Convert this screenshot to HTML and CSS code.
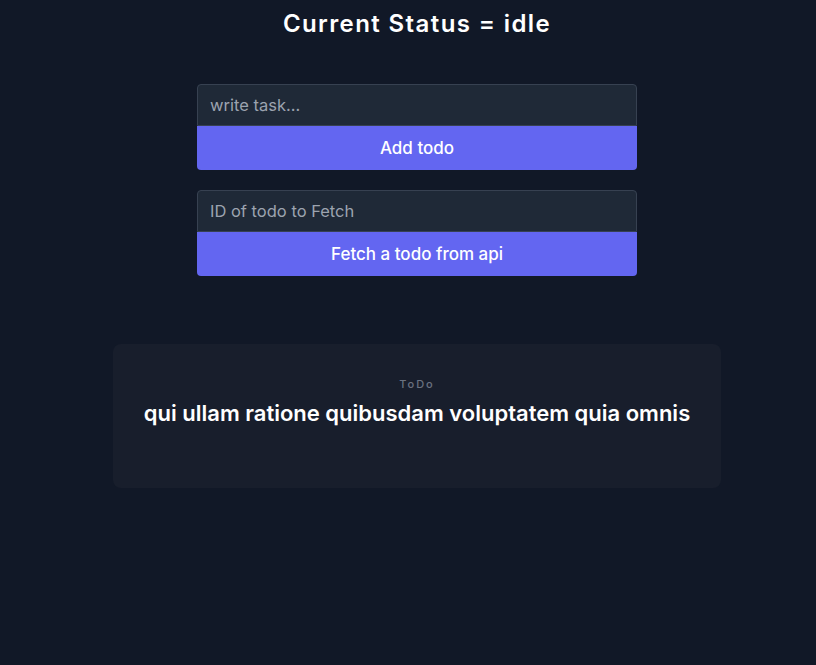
FILE: index.html
```html
<!DOCTYPE html>
<html>
<head>
<meta charset="utf-8">
<link rel="stylesheet" href="styles.css">
</head>
<body>
<div class="page">
  <h1 class="title">Current Status = idle</h1>
  <div class="forms">
    <form class="group">
      <input class="field" type="text" placeholder="write task...">
      <button class="btn" type="button">Add todo</button>
    </form>
    <form class="group">
      <input class="field" type="text" placeholder="ID of todo to Fetch">
      <button class="btn" type="button">Fetch a todo from api</button>
    </form>
  </div>
  <div class="card">
    <div class="label">ToDo</div>
    <div class="todo">qui ullam ratione quibusdam voluptatem quia omnis</div>
  </div>
</div>
</body>
</html>
```

FILE: styles.css
```css
html, body {
  margin: 0;
  padding: 0;
  background: #111827;
  height: 100%;
}
body {
  font-family: Inter, "Noto Sans", sans-serif;
  color: #fff;
}
.page {
  padding-left: 18px;
  display: flex;
  flex-direction: column;
  align-items: center;
}
.title {
  margin: 8px 0 0;
  font-size: 24px;
  line-height: 32px;
  font-weight: 600;
  letter-spacing: 1.4px;
}
.forms {
  margin-top: 44px;
  display: flex;
  flex-direction: column;
  gap: 20px;
  width: 440px;
}
.group {
  display: flex;
  flex-direction: column;
  margin: 0;
}
.field {
  box-sizing: border-box;
  height: 42px;
  padding: 0 12px;
  background: #1f2937;
  border: 1px solid #374151;
  border-radius: 4px 4px 0 0;
  color: #fff;
  font-family: inherit;
  font-size: 16.5px;
  outline: none;
}
.field::placeholder {
  color: #9ca3af;
}
.btn {
  height: 44px;
  border: none;
  border-radius: 0 0 4px 4px;
  background: #6366f1;
  color: #fff;
  font-family: inherit;
  font-size: 17px;
  font-weight: 500;
}
.card {
  margin-top: 68px;
  box-sizing: border-box;
  width: 608px;
  height: 144px;
  padding-top: 32px;
  border-radius: 8px;
  background: #181e2c;
  text-align: center;
}
.label {
  font-size: 11px;
  line-height: 16px;
  letter-spacing: 2px;
  color: #6b7280;
  font-weight: 500;
}
.todo {
  margin-top: 7px;
  font-size: 22px;
  line-height: 28px;
  font-weight: 600;
}
```
